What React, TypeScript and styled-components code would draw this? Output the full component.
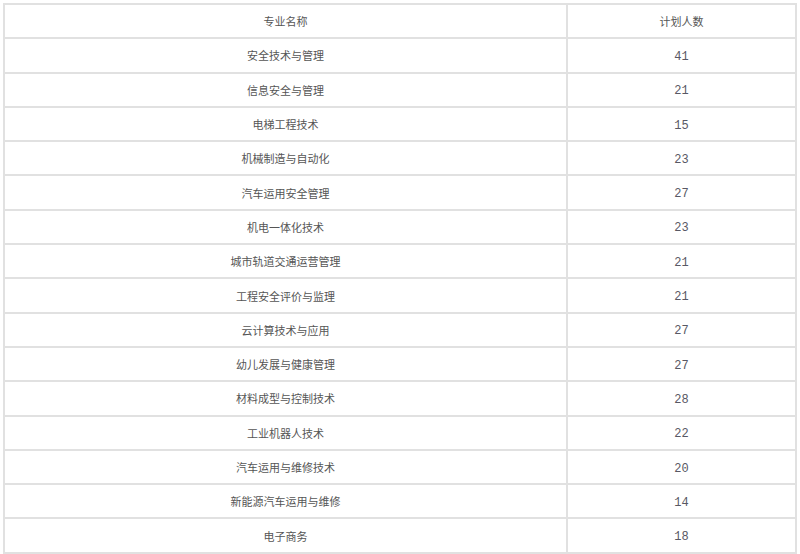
import React from "react";
import styled, { createGlobalStyle } from "styled-components";

const rows: [string, number][] = [
	["安全技术与管理", 41],
	["信息安全与管理", 21],
	["电梯工程技术", 15],
	["机械制造与自动化", 23],
	["汽车运用安全管理", 27],
	["机电一体化技术", 23],
	["城市轨道交通运营管理", 21],
	["工程安全评价与监理", 21],
	["云计算技术与应用", 27],
	["幼儿发展与健康管理", 27],
	["材料成型与控制技术", 28],
	["工业机器人技术", 22],
	["汽车运用与维修技术", 20],
	["新能源汽车运用与维修", 14],
	["电子商务", 18],
];

const GlobalStyle = createGlobalStyle`
	html, body {
		margin: 0;
		padding: 0;
		background: #fff;
	}
`;

const Page = styled.div`
	padding: 3px;
`;

const Table = styled.table`
	width: 100%;
	border-collapse: collapse;
	font-family: "Noto Sans CJK SC", sans-serif;
	font-size: 11px;
	color: #555;
`;

const Cell = styled.td<{ $num?: boolean }>`
	border: 2px solid #e1e1e1;
	height: 32.3px;
	padding: 0;
	text-align: center;
	vertical-align: middle;
	font-weight: 400;
	width: ${(p) => (p.$num ? "227px" : "auto")};
`;

const Num = styled.span`
	font-family: "Liberation Mono", monospace;
	font-size: 12px;
	color: #585864;
`;

export default function App() {
	return (
		<Page>
			<GlobalStyle />
			<Table>
				<thead>
					<tr>
						<Cell as="th">专业名称</Cell>
						<Cell as="th" $num>
							计划人数
						</Cell>
					</tr>
				</thead>
				<tbody>
					{rows.map(([name, n]) => (
						<tr key={name}>
							<Cell>{name}</Cell>
							<Cell $num>
								<Num>{n}</Num>
							</Cell>
						</tr>
					))}
				</tbody>
			</Table>
		</Page>
	);
}
